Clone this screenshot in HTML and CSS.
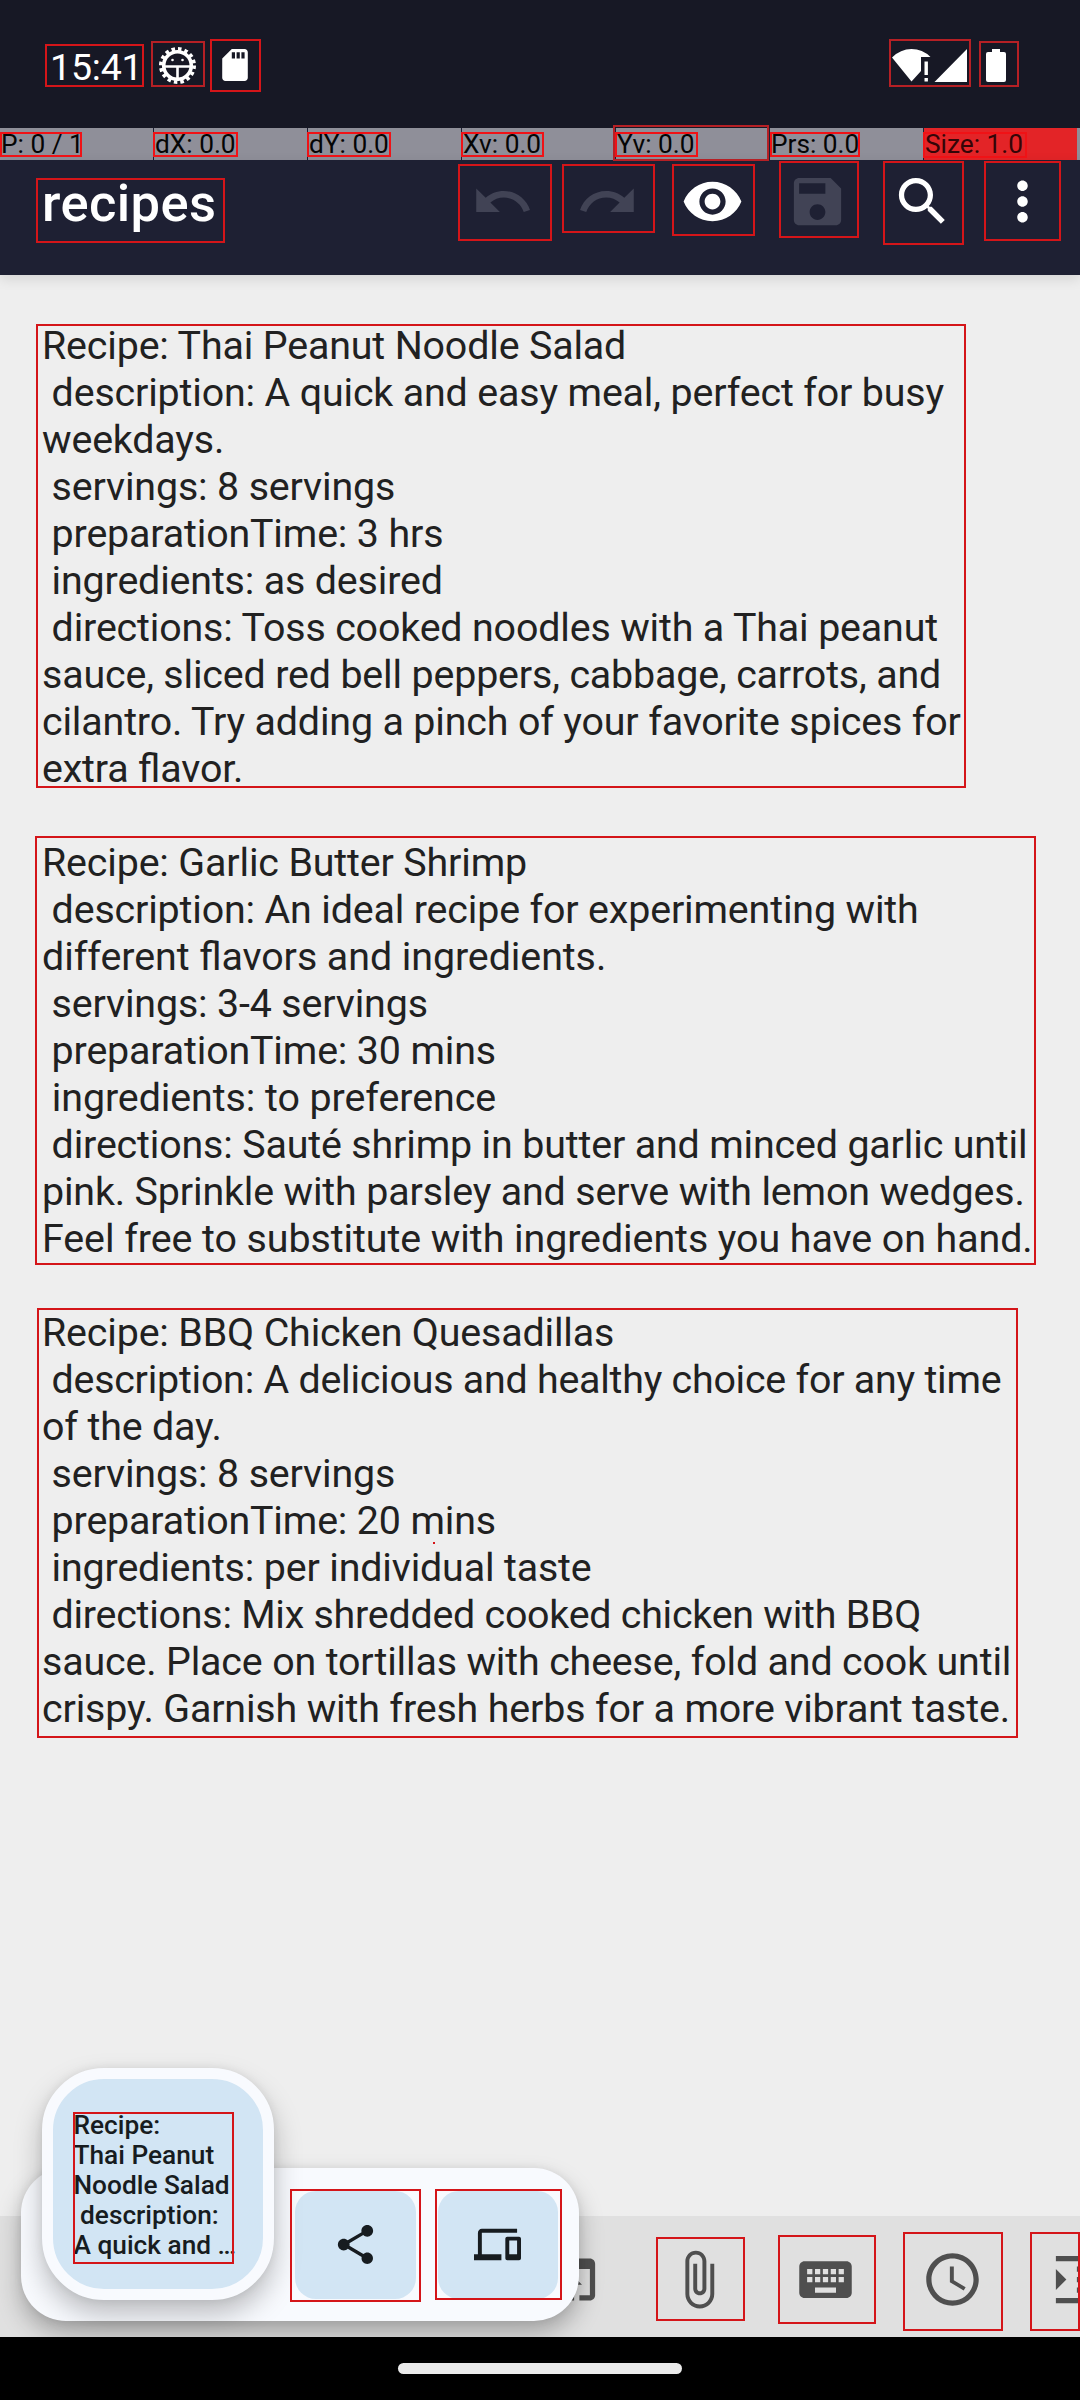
FILE: index.html
```html
<!DOCTYPE html>
<html lang="en">
<head>
<meta charset="utf-8">
<title>recipes</title>
<link rel="stylesheet" href="styles.css">
</head>
<body>
<div class="screen">
  <div class="status-bar">
    <span class="clock">15:41</span>
    <svg class="status-bug" viewBox="0 0 37 37"><circle cx="18.500" cy="18.500" r="13.800" fill="none" stroke="#fff" stroke-width="3.600"/><circle cx="18.500" cy="18.500" r="16.700" fill="none" stroke="#fff" stroke-width="3.600" stroke-dasharray="3.500 3.060"/><path d="M4 19.500h29M18.500 20v14" stroke="#fff" stroke-width="2.600"/><circle cx="13.500" cy="13" r="1.300" fill="#fff"/><circle cx="23.500" cy="13" r="1.300" fill="#fff"/></svg>
    <svg class="status-sd" viewBox="4 2 16 20"><path fill="#fff" d="M18 2h-8L4.020 8 4 20c0 1.100.9 2 2 2h12c1.100 0 2-.9 2-2V4c0-1.100-.9-2-2-2zm-6 6h-2V4h2v4zm3 0h-2V4h2v4zm3 0h-2V4h2v4z"/></svg>
    <div class="status-right">
      <svg class="status-net" viewBox="0 0 75 33"><path fill="#fff" d="M0 8.500Q8.500 0 19.500 0T38.500 8H29v14L19.500 32.500zM32.500 12.500h3.400v13.500h-3.400zM32.500 29h3.400v3.500h-3.400zM75 0v33H42.500z"/></svg>
      <svg class="status-batt" viewBox="0 0 20 33"><path fill="#fff" d="M6 0h8v3h4q2 0 2 2v26q0 2-2 2H2q-2 0-2-2V5q0-2 2-2h4z"/></svg>
    </div>
  </div>
  <div class="pointer-bar">
    <span>P: 0 / 1</span><span>dX: 0.0</span><span>dY: 0.0</span><span>Xv: 0.0</span><span>Yv: 0.0</span><span>Prs: 0.0</span><span class="pressure">Size: 1.0</span>
  </div>
  <header class="app-bar">
    <h1>recipes</h1>
    <nav class="actions">
      <svg class="icon off" viewBox="0 0 24 24"><path d="M12.500 8c-2.650 0-5.050.99-6.900 2.600L2 7v9h9l-3.620-3.620c1.390-1.160 3.160-1.880 5.120-1.880 3.540 0 6.550 2.310 7.600 5.500l2.370-.78C21.080 11.030 17.150 8 12.500 8z"/></svg>
      <svg class="icon off" viewBox="0 0 24 24"><path d="M18.400 10.600C16.550 8.990 14.150 8 11.500 8c-4.650 0-8.580 3.030-9.960 7.220L3.900 16c1.050-3.190 4.050-5.500 7.600-5.500 1.950 0 3.730.72 5.120 1.880L13 16h9V7l-3.600 3.600z"/></svg>
      <svg class="icon" viewBox="0 0 24 24"><path d="M12 4.500C7 4.500 2.730 7.610 1 12c1.730 4.390 6 7.500 11 7.500s9.270-3.110 11-7.500c-1.730-4.390-6-7.500-11-7.500zM12 17c-2.760 0-5-2.240-5-5s2.240-5 5-5 5 2.240 5 5-2.240 5-5 5zm0-8c-1.660 0-3 1.340-3 3s1.340 3 3 3 3-1.340 3-3-1.340-3-3-3z"/></svg>
      <svg class="icon off" viewBox="0 0 24 24"><path d="M17 3H5c-1.110 0-2 .9-2 2v14c0 1.100.89 2 2 2h14c1.100 0 2-.9 2-2V7l-4-4zm-5 16c-1.660 0-3-1.340-3-3s1.340-3 3-3 3 1.340 3 3-1.340 3-3 3zm3-10H5V5h10v4z"/></svg>
      <svg class="icon" viewBox="0 0 24 24"><path d="M15.500 14h-.79l-.28-.27C15.410 12.590 16 11.110 16 9.500 16 5.910 13.090 3 9.500 3S3 5.910 3 9.500 5.910 16 9.500 16c1.610 0 3.090-.59 4.230-1.570l.27.28v.79l5 4.990L20.490 19l-4.990-5zm-6 0C7.010 14 5 11.990 5 9.500S7.010 5 9.500 5 14 7.010 14 9.500 11.990 14 9.500 14z"/></svg>
      <svg class="icon more" viewBox="0 0 24 24"><path d="M12 8c1.100 0 2-.9 2-2s-.9-2-2-2-2 .9-2 2 .9 2 2 2zm0 2c-1.100 0-2 .9-2 2s.9 2 2 2 2-.9 2-2-.9-2-2-2zm0 6c-1.100 0-2 .9-2 2s.9 2 2 2 2-.9 2-2-.9-2-2-2z"/></svg>
    </nav>
  </header>
  <main class="editor">
<p class="recipe">Recipe: Thai Peanut Noodle Salad
 description: A quick and easy meal, perfect for busy
weekdays.
 servings: 8 servings
 preparationTime: 3 hrs
 ingredients: as desired
 directions: Toss cooked noodles with a Thai peanut
sauce, sliced red bell peppers, cabbage, carrots, and
cilantro. Try adding a pinch of your favorite spices for
extra flavor.</p>
<p class="recipe">Recipe: Garlic Butter Shrimp
 description: An ideal recipe for experimenting with
<span class="loose">different flavors and ingredients.</span>
 servings: 3-4 servings
 preparationTime: 30 mins
<span class="loose"> ingredients: to preference</span>
 directions: Sauté shrimp in butter and minced garlic until
pink. Sprinkle with parsley and serve with lemon wedges.
<span class="loose">Feel free to substitute with ingredients you have on hand.</span></p>
<p class="recipe">Recipe: BBQ Chicken Quesadillas
<span class="tight"> description: A delicious and healthy choice for any time</span>
of the day.
 servings: 8 servings
 preparationTime: 20 mins
 ingredients: per individual taste
<span class="tight"> directions: Mix shredded cooked chicken with BBQ</span>
sauce. Place on tortillas with cheese, fold and cook until
crispy. Garnish with fresh herbs for a more vibrant taste.</p>
  </main>
  <div class="toolbar">
    <svg class="icon" viewBox="0 0 24 24"><path d="M19 4H5c-1.110 0-2 .9-2 2v12c0 1.100.89 2 2 2h4v-2H5V8h14v10h-4v2h4c1.100 0 2-.9 2-2V6c0-1.100-.89-2-2-2zm-7 6l-4 4h3v6h2v-6h3l-4-4z"/></svg>
    <svg class="icon" viewBox="0 0 24 24"><path d="M16.500 6v11.500c0 2.210-1.790 4-4 4s-4-1.790-4-4V5c0-1.380 1.120-2.500 2.500-2.500s2.500 1.120 2.500 2.500v10.500c0 .55-.45 1-1 1s-1-.45-1-1V6H10v9.500c0 1.380 1.120 2.500 2.500 2.500s2.500-1.120 2.500-2.500V5c0-2.210-1.790-4-4-4S7 2.790 7 5v12.500c0 3.040 2.460 5.500 5.500 5.500s5.500-2.460 5.500-5.500V6h-1.500z"/></svg>
    <svg class="icon" viewBox="0 0 24 24"><path d="M20 5H4c-1.100 0-1.990.9-1.990 2L2 17c0 1.100.9 2 2 2h16c1.100 0 2-.9 2-2V7c0-1.100-.9-2-2-2zm-9 3h2v2h-2V8zm0 3h2v2h-2v-2zM8 8h2v2H8V8zm0 3h2v2H8v-2zm-1 2H5v-2h2v2zm0-3H5V8h2v2zm9 7H8v-2h8v2zm0-4h-2v-2h2v2zm0-3h-2V8h2v2zm3 3h-2v-2h2v2zm0-3h-2V8h2v2z"/></svg>
    <svg class="icon" viewBox="0 0 24 24"><path d="M11.990 2C6.470 2 2 6.480 2 12s4.470 10 9.990 10C17.520 22 22 17.520 22 12S17.520 2 11.990 2zM12 20c-4.420 0-8-3.580-8-8s3.580-8 8-8 8 3.580 8 8-3.580 8-8 8zm.5-13H11v6l5.250 3.150.75-1.230-4.500-2.670z"/></svg>
    <svg class="icon" viewBox="0 0 24 24"><path d="M3 21h18v-2H3v2zM3 8v8l4-4-4-4zm8 9h10v-2H11v2zM3 3v2h18V3H3zm8 6h10V7H11v2zm0 4h10v-2H11v2z"/></svg>
  </div>
  <div class="nav-bar"><div class="handle"></div></div>

  <div class="clip-layer">
    <div class="clip-actions">
      <div class="chip"><svg viewBox="0 0 24 24"><path d="M18 16.080c-.76 0-1.440.3-1.960.77L8.910 12.700c.05-.23.09-.46.09-.7s-.04-.47-.09-.7l7.050-4.110c.54.5 1.250.81 2.040.81 1.660 0 3-1.340 3-3s-1.340-3-3-3-3 1.340-3 3c0 .24.04.47.09.7L8.040 9.810C7.500 9.310 6.790 9 6 9c-1.660 0-3 1.340-3 3s1.340 3 3 3c.79 0 1.500-.31 2.040-.81l7.120 4.160c-.05.21-.08.43-.08.65 0 1.610 1.310 2.920 2.920 2.920 1.610 0 2.920-1.310 2.920-2.920s-1.310-2.920-2.920-2.920z"/></svg></div>
      <div class="chip"><svg viewBox="0 0 24 24"><path d="M4 6h18V4H4c-1.100 0-2 .9-2 2v11H0v3h14v-3H4V6zm19 2h-6c-.55 0-1 .45-1 1v10c0 .55.45 1 1 1h6c.55 0 1-.45 1-1V9c0-.55-.45-1-1-1zm-1 9h-4v-7h4v7z"/></svg></div>
    </div>
    <div class="clip-preview"><div class="clip-text">Recipe:
Thai Peanut
Noodle Salad
 description:
A quick and …</div></div>
  </div>

  <svg class="bounds" viewBox="0 0 1080 2400">
    <g class="soft">
      <rect x="152" y="42" width="52" height="44"/>
      <rect x="890" y="40" width="80" height="46"/>
      <rect x="980" y="42" width="38" height="44"/>
      <rect x="614" y="126" width="154" height="34"/>
    </g>
    <rect x="46" y="45" width="97" height="41"/>
    <rect x="211" y="40" width="49" height="51"/>
    <g class="bright">
      <rect x="1" y="133" width="80" height="23"/>
      <rect x="154" y="133" width="83" height="23"/>
      <rect x="308" y="133" width="82" height="23"/>
      <rect x="462" y="133" width="81" height="23"/>
      <rect x="616" y="133" width="81" height="23"/>
      <rect x="771" y="133" width="88" height="23"/>
      <rect x="924" y="133" width="102" height="24"/>
    </g>
    <rect x="37" y="179" width="187" height="63"/>
    <rect x="459" y="165" width="92" height="75"/>
    <rect x="563" y="165" width="91" height="67"/>
    <rect x="673" y="165" width="81" height="70"/>
    <rect x="780" y="162" width="78" height="75"/>
    <rect x="884" y="162" width="79" height="82"/>
    <rect x="985" y="162" width="75" height="78"/>
    <rect x="37" y="325" width="928" height="462"/>
    <rect x="36" y="837" width="999" height="427"/>
    <rect x="38" y="1309" width="979" height="428"/>
    <rect x="74" y="2113" width="159" height="150"/>
    <rect x="291" y="2190" width="129" height="111"/>
    <rect x="436" y="2190" width="125" height="109"/>
    <rect x="657" y="2238" width="87" height="82"/>
    <rect x="779" y="2236" width="96" height="87"/>
    <rect x="904" y="2233" width="98" height="97"/>
    <rect x="1031" y="2233" width="48" height="97"/>
    <path d="M433 1543h2"/>
  </svg>
</div>
</body>
</html>
```
FILE: styles.css
```css
* { box-sizing: border-box; }
body { margin: 0; font-family: Roboto, sans-serif; background: #eee; }
.screen {
  position: relative;
  display: flex;
  flex-direction: column;
  width: 1080px;
  height: 2400px;
  overflow: hidden;
}

.status-bar {
  display: flex;
  align-items: center;
  height: 128px;
  padding: 2px 74px 0 50px;
  background: #171825;
  color: #fff;
}
.clock { width: 109px; padding-top: 3px; font-size: 37.5px; line-height: 44px; letter-spacing: -.2px; }
.status-bug { width: 37px; height: 37px; }
.status-sd { width: 26px; height: 32px; margin-left: 26px; }
.status-right { display: flex; gap: 19px; margin-left: auto; }
.status-net { width: 75px; height: 33px; }
.status-batt { width: 20px; height: 33px; }

.pointer-bar {
  display: grid;
  grid-template-columns: repeat(7, 153px);
  column-gap: 1px;
  height: 32px;
  font-size: 26.25px;
  line-height: 33px;
  color: #050505;
  background: linear-gradient(to right, #1e2033 1077px, #8f8f99 1077px);
}
.pointer-bar span { padding-left: 1px; background: #8f8f99; white-space: nowrap; }
.pointer-bar .pressure { background: #e32427; color: #350507; }

.app-bar {
  display: flex;
  justify-content: space-between;
  height: 115px;
  padding: 10px 26px 0 42px;
  background: #1e2033;
  box-shadow: 0 4px 12px rgba(0, 0, 0, .11);
}
.app-bar h1 { margin: 0; padding-top: 2px; font-size: 52.5px; line-height: 62px; font-weight: 500; letter-spacing: .4px; color: #fff; }
.actions { display: flex; gap: 42px; }
.icon { flex: none; width: 63px; height: 63px; fill: #fff; }
.icon.off { fill: #414355; }
.icon.more { margin-left: -5px; }

.editor {
  flex: 1;
  display: flex;
  flex-direction: column;
  gap: 47px;
  padding: 47px 20px 0 42px;
}
.recipe {
  margin: 0;
  font-size: 39.375px;
  line-height: 47px;
  letter-spacing: -.15px;
  font-feature-settings: "liga" 1;
  white-space: pre;
  color: #212121;
}
.recipe .tight { letter-spacing: -.23px; }
.recipe .loose { letter-spacing: -.06px; }

.toolbar {
  display: flex;
  gap: 64px;
  height: 121px;
  padding: 32px 0 0 540px;
  background: #e0e0e0;
  overflow: hidden;
}
.toolbar .icon { fill: #4f4f4f; }
.nav-bar { display: flex; justify-content: center; height: 63px; padding-top: 26px; background: #000; }
.handle { width: 284px; height: 11px; border-radius: 6px; background: #ebebeb; }

/* floating clipboard card, cut off at the system navigation bar */
.clip-layer { position: absolute; left: 0; top: 2000px; width: 700px; height: 337px; overflow: hidden; }
.clip-actions {
  position: absolute;
  left: 21px;
  top: 168px;
  display: flex;
  gap: 22px;
  width: 558px;
  height: 153px;
  padding: 23px 21px 22px 274px;
  border-radius: 45px;
  background: #f8fafe;
  box-shadow: 0 12px 24px rgba(0, 0, 0, .28), 0 0 8px rgba(0, 0, 0, .06);
}
.chip { display: flex; flex: 1; align-items: center; justify-content: center; border-radius: 21px; background: #d2e5f4; }
.chip svg { width: 47px; height: 47px; margin-bottom: 2px; fill: #171c20; }
.clip-preview {
  position: absolute;
  left: 42px;
  top: 68px;
  width: 232px;
  height: 232px;
  padding: 31px 0 0 20.5px;
  border: 11px solid #f8fafe;
  border-radius: 62px;
  background: #d2e5f4;
  box-shadow: 0 14px 28px rgba(0, 0, 0, .25), 0 0 10px rgba(0, 0, 0, .07);
}
.clip-text { font-size: 26.25px; font-weight: 500; line-height: 30px; white-space: pre; color: #171c20; }

.bounds { position: absolute; inset: 0; width: 1080px; height: 2400px; fill: none; stroke: #d41519; stroke-width: 2; pointer-events: none; }
.bounds .soft { stroke: #b62025; }
.bounds .bright { stroke: #f01216; }
```
